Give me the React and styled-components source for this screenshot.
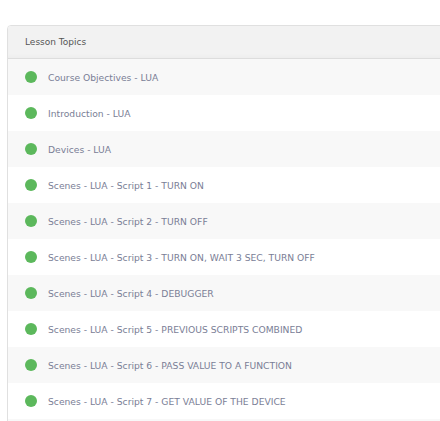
import styled, { createGlobalStyle } from 'styled-components';

const GlobalStyle = createGlobalStyle`
  html, body {
    margin: 0;
    padding: 0;
    background: #ffffff;
    overflow: hidden;
  }
`;

const lessons = [
  'Course Objectives - LUA',
  'Introduction - LUA',
  'Devices - LUA',
  'Scenes - LUA - Script 1 - TURN ON',
  'Scenes - LUA - Script 2 - TURN OFF',
  'Scenes - LUA - Script 3 - TURN ON, WAIT 3 SEC, TURN OFF',
  'Scenes - LUA - Script 4 - DEBUGGER',
  'Scenes - LUA - Script 5 - PREVIOUS SCRIPTS COMBINED',
  'Scenes - LUA - Script 6 - PASS VALUE TO A FUNCTION',
  'Scenes - LUA - Script 7 - GET VALUE OF THE DEVICE',
];

const App = () => {
  return (
    <Page>
      <GlobalStyle />
      <Panel>
        <Header>Lesson Topics</Header>
        {lessons.map((title, i) => (
          <Row key={title} $odd={i % 2 === 0}>
            <Dot />
            <Title>{title}</Title>
          </Row>
        ))}
        <Row $odd />
      </Panel>
    </Page>
  );
};

const Page = styled.div`
  width: 440px;
  height: 421px;
  overflow: hidden;
  padding: 25px 0 0 7px;
  box-sizing: border-box;
  font-family: "DejaVu Sans", Verdana, sans-serif;
`;

const Panel = styled.div`
  width: 470px;
  border: 1px solid #e0e0e0;
  border-radius: 4px;
  overflow: hidden;
  background: #fff;
`;

const Header = styled.div`
  height: 32px;
  display: flex;
  align-items: center;
  padding-left: 17px;
  background: #f2f2f2;
  border-bottom: 1px solid #dddddd;
  box-shadow: inset 0 -3px 4px -2px rgba(0, 0, 0, 0.03);
  color: #555555;
  font-size: 9px;
`;

const Row = styled.div`
  height: 36px;
  display: flex;
  align-items: center;
  padding-left: 17px;
  background: ${(p) => (p.$odd ? '#f8f8f8' : '#ffffff')};
`;

const Dot = styled.span`
  width: 12px;
  height: 12px;
  border-radius: 50%;
  background: #5cb85c;
  flex-shrink: 0;
`;

const Title = styled.span`
  margin-left: 11px;
  color: #7a7e96;
  font-size: 9.2px;
`;

export default App;
